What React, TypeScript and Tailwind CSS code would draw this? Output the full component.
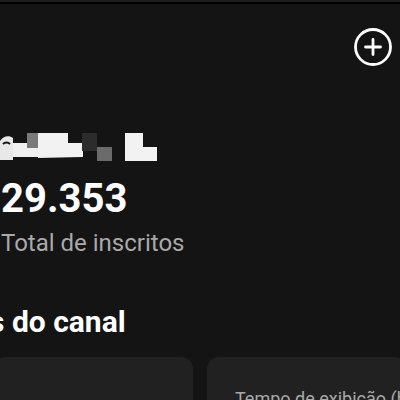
import { ReactNode } from "react";

function AddButton() {
  return (
    <svg width="40" height="40" viewBox="0 0 40 40" fill="none" className="text-white">
      <circle cx="20" cy="20" r="17.5" stroke="currentColor" strokeWidth="2.8" />
      <path d="M20 12.5v15M12.5 20h15" stroke="currentColor" strokeWidth="2.8" strokeLinecap="round" />
    </svg>
  );
}

// pixelated (censored) channel name
function BlurredName() {
  return (
    <svg width="170" height="34" viewBox="0 0 170 34">
      <path d="M0 14c3-5 9-6 13-3v22H0z" fill="#e8e8e8" />
      <path d="M3 17c2-2 5-2 7 0" stroke="#151515" strokeWidth="2" fill="none" />
      <rect x="13" y="16" width="70" height="14" fill="#f0f0f0" />
      <rect x="27" y="6" width="11" height="15" fill="#7a7a7a" />
      <path d="M38 6h30v10h14v14l-44 1z" fill="#f2f2f2" />
      <rect x="82" y="6" width="15" height="18" fill="#2c2c2c" />
      <rect x="97" y="20" width="15" height="15" fill="#6b6b6b" />
      <path d="M125 6h18v14h14v14h-32z" fill="#f2f2f2" />
    </svg>
  );
}

function StatCard({ label, className }: { label?: string; className?: string }) {
  return (
    <div className={`h-[120px] w-[200px] shrink-0 rounded-xl bg-[#212121] px-7 pt-[30px] ${className ?? ""}`}>
      {label && <p className="whitespace-nowrap text-[18px] leading-[24px] text-[#a8a8a8]">{label}</p>}
    </div>
  );
}

export default function App(): ReactNode {
  return (
    <div className="h-[400px] w-[400px] overflow-hidden bg-[#141414] font-['Roboto',sans-serif]">
      <div className="h-[2px] bg-[#1e1e1e]" />
      <div className="h-[2px] bg-black" />
      <div className="flex justify-end pr-[7px] pt-[23px]">
        <AddButton />
      </div>

      <div className="mt-[60px]">
        <BlurredName />
      </div>
      <p className="mt-[14px] pl-[1px] text-[40px] font-bold leading-[48px] text-white">29.353</p>
      <p className="mt-[5px] pl-[1px] text-[24px] leading-[30px] text-[#a9a9a9]">Total de inscritos</p>

      <h2 className="ml-[-111px] mt-[46px] whitespace-nowrap text-[30px] font-bold leading-[36px] text-white">
        Análises do canal
      </h2>

      <div className="ml-[-7px] mt-[17px] flex gap-[14px]">
        <StatCard />
        <StatCard label="Tempo de exibição (horas)" />
      </div>
    </div>
  );
}
